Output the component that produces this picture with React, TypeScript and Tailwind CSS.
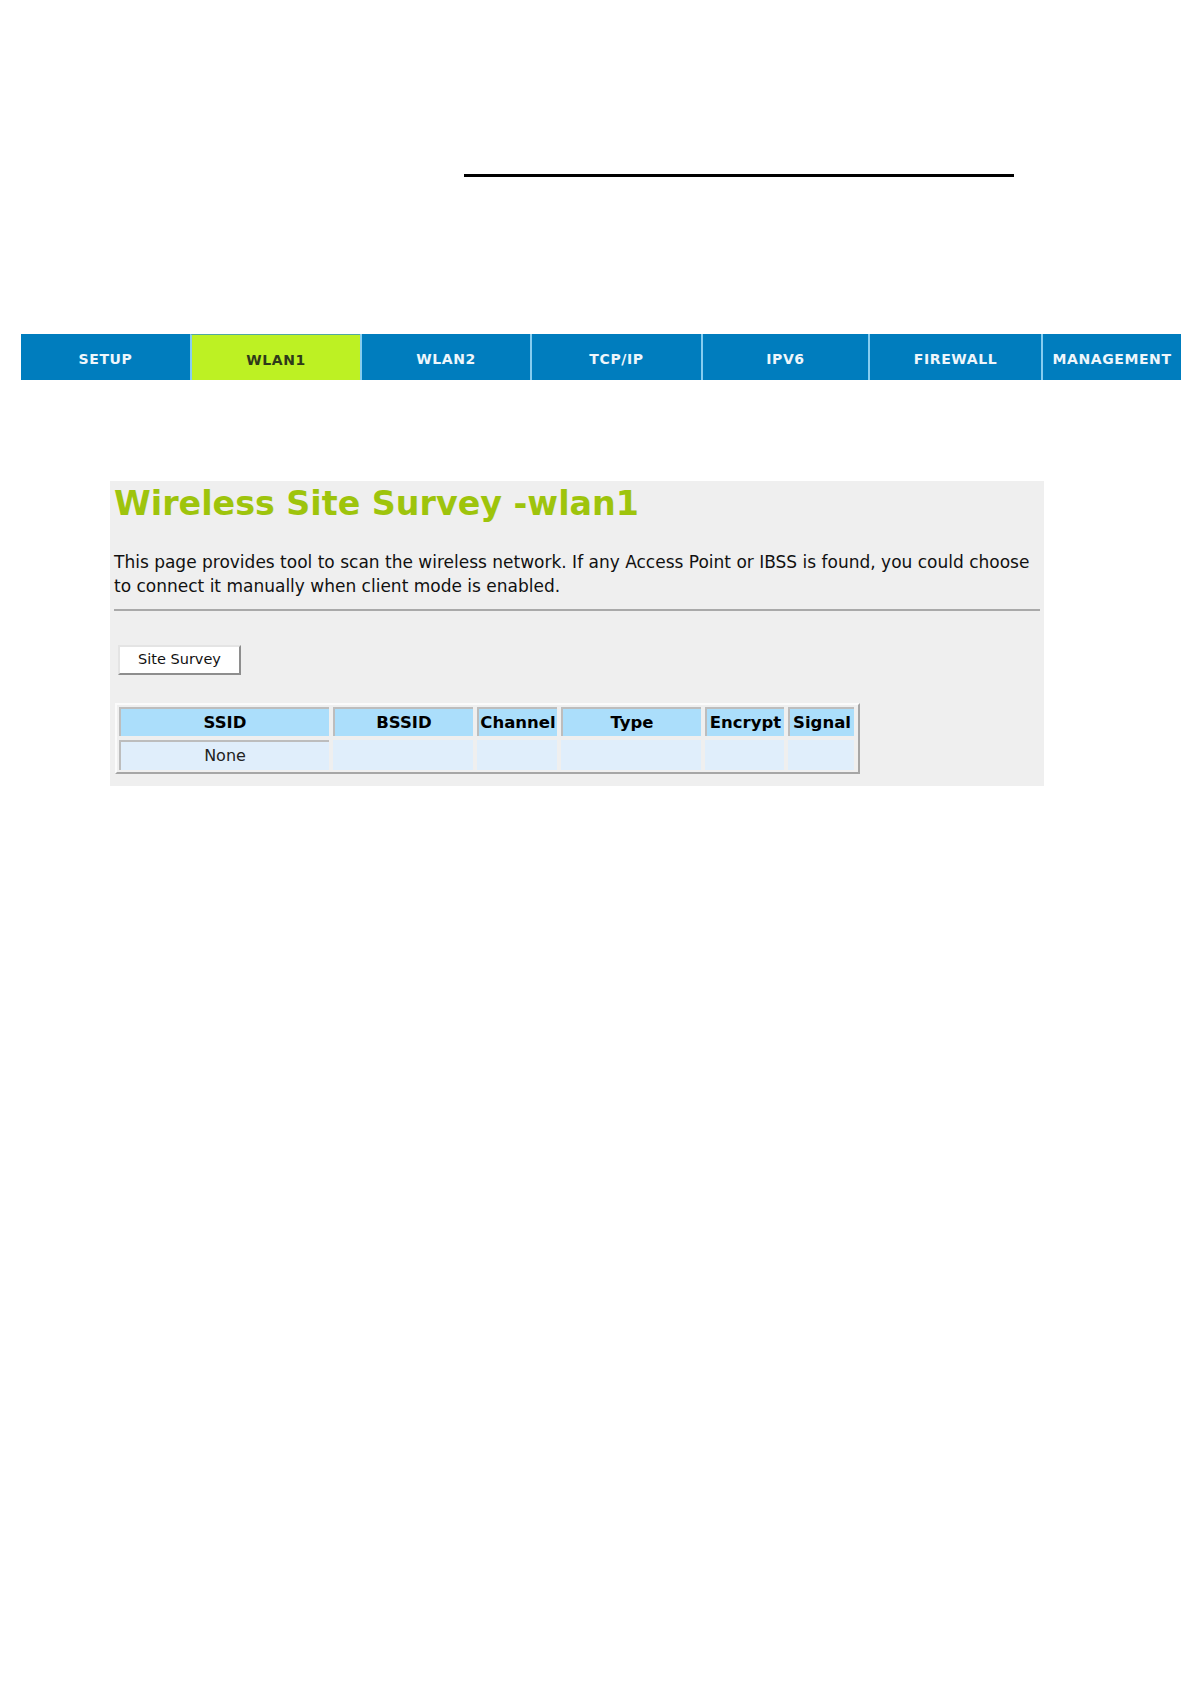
const tabs = [
  { label: "SETUP", w: "w-[169px]" },
  { label: "WLAN1", w: "w-[170px]", active: true },
  { label: "WLAN2", w: "w-[170px]" },
  { label: "TCP/IP", w: "w-[171px]" },
  { label: "IPV6", w: "w-[167px]" },
  { label: "FIREWALL", w: "w-[173px]" },
  { label: "MANAGEMENT", w: "w-[140px]" },
];

const cols = ["SSID", "BSSID", "Channel", "Type", "Encrypt", "Signal"];

export default function App() {
  return (
    <div className="min-h-[1684px] w-[1191px] bg-white font-['DejaVu_Sans',sans-serif]">
      {/* top rule */}
      <div className="pt-[174px] pl-[464px]">
        <div className="h-[3px] w-[550px] bg-black" />
      </div>

      {/* nav bar */}
      <nav className="mt-[157px] ml-[21px] flex h-[46px] w-[1160px]">
        {tabs.map((t, i) => (
          <div
            key={t.label}
            className={`${t.w} flex h-full items-center justify-center pt-[5px] text-[14px] font-bold tracking-[0.6px] ${
              i > 0 ? "border-l-[2px] border-[#86cdf0]" : ""
            } ${
              t.active
                ? "border-t border-t-[#52a9a0] bg-[#bdf123] text-[#2f3a1a]"
                : "bg-[#007dbe] text-[#eef6fb]"
            }`}
          >
            {t.label}
          </div>
        ))}
      </nav>

      {/* survey panel */}
      <section className="mt-[101px] ml-[110px] h-[305px] w-[934px] bg-[#efefef] px-[4px] pt-[6px]">
        <h1 className="text-[33.3px] font-bold leading-[34px] text-[#9ec40c]">
          Wireless Site Survey -wlan1
        </h1>
        <p className="mt-[29px] text-[17px] leading-[24px] text-[#111]">
          This page provides tool to scan the wireless network. If any Access Point or IBSS is found, you could choose
          <br />
          to connect it manually when client mode is enabled.
        </p>
        <div className="mt-[11px] h-[2px] w-full bg-[#a9a9a9]" />

        <button className="mt-[34px] ml-[4px] h-[30px] w-[123px] border-[2px] border-t-[#e4e4e4] border-l-[#e4e4e4] border-r-[#8e8e8e] border-b-[#8e8e8e] bg-white text-[14.5px] text-[#111]">
          Site Survey
        </button>

        <div className="mt-[28px] ml-[1px] w-[745px] border-[2px] border-t-[#fbfbfb] border-l-[#fbfbfb] border-r-[#a6a6a6] border-b-[#a6a6a6] p-[2px]">
          <div className="grid grid-cols-[210px_140px_80px_140px_79px_66px] gap-[4px]">
            {cols.map((c) => (
              <div
                key={c}
                className="flex h-[29px] items-center justify-center border-t-[2px] border-l-[2px] border-[#bdbdbd] bg-[#abdefb] pt-[2px] text-[16.5px] font-bold text-black"
              >
                {c}
              </div>
            ))}
            <div className="flex h-[30px] items-center justify-center border-t-[2px] border-l-[2px] border-[#bdbdbd] bg-[#e0eefb] text-[16px] text-[#222]">
              None
            </div>
            {cols.slice(1).map((c) => (
              <div key={c} className="h-[30px] bg-[#e0eefb]" />
            ))}
          </div>
        </div>
      </section>
    </div>
  );
}
